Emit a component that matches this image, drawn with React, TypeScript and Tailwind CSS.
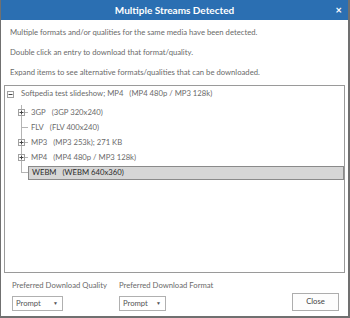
import React from "react";

const Plus = ({ minus }: { minus?: boolean }) => (
  <svg width="7" height="7" viewBox="0 0 7 7" className="block">
    <rect x="0.5" y="0.5" width="6" height="6" fill="#fff" stroke="#a0a0a0" />
    <line x1="1.5" y1="3.5" x2="5.5" y2="3.5" stroke="#444" />
    {!minus && <line x1="3.5" y1="1.5" x2="3.5" y2="5.5" stroke="#444" />}
  </svg>
);

const Child = ({
  label,
  sub,
  expand,
  last,
  selected,
}: {
  label: string;
  sub: string;
  expand?: boolean;
  last?: boolean;
  selected?: boolean;
}) => (
  <div className="relative flex h-[15px] items-center">
    <div
      className={`absolute left-[16px] top-0 w-px bg-[#b4b4b4] ${last ? "h-[8px]" : "h-[15px]"}`}
    />
    <div className="absolute left-[16px] top-[7px] h-px w-[7px] bg-[#b4b4b4]" />
    {expand && (
      <div className="absolute left-[13px] top-[4px]">
        <Plus />
      </div>
    )}
    <div
      className={`ml-[23px] flex items-center ${
        selected
          ? "flex-1 h-[14px] border border-[#8a8a8a] bg-[#d6d6d6] pl-[3px] text-[#2a2a2a]"
          : "h-[15px] pl-[3px] text-[#6a6a6a]"
      }`}
    >
      <span>{label}</span>
      <span className="ml-[6px]">{sub}</span>
    </div>
  </div>
);

const Select = ({ w }: { w: string }) => (
  <div
    className={`mt-[5px] flex h-[15px] ${w} items-center justify-between border border-[#b0b0b0] pl-[3px] pr-[4px] text-[#555]`}
  >
    <span>Prompt</span>
    <span className="text-[5px]">▼</span>
  </div>
);

export default function App() {
  return (
    <div
      className="w-[350px] h-[318px] flex flex-col bg-white border-l border-b-2 border-r-2 border-[#707070] text-[7.7px]"
      style={{ fontFamily: 'Lato, "Open Sans", sans-serif' }}
    >
      <div className="relative h-[20px] shrink-0 bg-[#2b6fb2] flex items-center justify-center">
        <span className="text-white font-bold text-[10px] leading-none">Multiple Streams Detected</span>
        <span className="absolute right-[6px] top-[4px] text-white font-bold text-[11px] leading-none">×</span>
      </div>
      <div className="px-[9px] pt-[2px] text-[#6a6a6a] leading-[20px]">
        <div>Multiple formats and/or qualities for the same media have been detected.</div>
        <div>Double click an entry to download that format/quality.</div>
        <div>Expand items to see alternative formats/qualities that can be downloaded.</div>
      </div>
      <div className="mx-[3px] mt-[3px] h-[188px] border border-[#9a9a9a] bg-white">
        <div className="flex h-[16px] items-center text-[#6a6a6a]">
          <div className="ml-[2px] mr-[7px]">
            <Plus minus />
          </div>
          <span>Softpedia test slideshow; MP4</span>
          <span className="ml-[6px]">(MP4 480p / MP3 128k)</span>
        </div>
        <div className="mt-[3px]">
          <Child label="3GP" sub="(3GP 320x240)" expand />
          <Child label="FLV" sub="(FLV 400x240)" />
          <Child label="MP3" sub="(MP3 253k); 271 KB" expand />
          <Child label="MP4" sub="(MP4 480p / MP3 128k)" expand />
          <Child label="WEBM" sub="(WEBM 640x360)" last selected />
        </div>
      </div>
      <div className="grid grid-cols-[107px_1fr_47px] pl-[11px] pr-[9px] pt-[6px] text-[#6a6a6a]">
        <div className="flex flex-col items-start">
          <div className="leading-[12px] whitespace-nowrap">Preferred Download Quality</div>
          <Select w="w-[51px]" />
        </div>
        <div className="flex flex-col items-start">
          <div className="leading-[12px] whitespace-nowrap">Preferred Download Format</div>
          <Select w="w-[47px]" />
        </div>
        <div className="flex items-end">
          <div className="flex h-[18px] w-[47px] items-center justify-center border border-[#adadad] bg-[#fdfdfd] text-[#444]">
            Close
          </div>
        </div>
      </div>
    </div>
  );
}
